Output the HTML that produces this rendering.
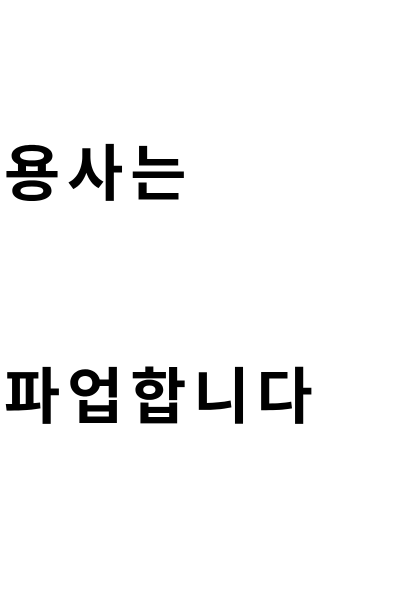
<!DOCTYPE html>
<html><head><meta charset="utf-8"><style>
html,body{margin:0;padding:0;background:#fff;width:400px;height:600px;overflow:hidden}
.t{position:absolute;left:4px;font-family:"Noto Sans CJK KR",sans-serif;font-weight:bold;font-size:61px;line-height:61px;letter-spacing:7px;color:#000;white-space:nowrap}
</style></head><body>
<div class="t" style="top:138px">용사는</div>
<div class="t" style="top:361px">파업합니다</div>
</body></html>
